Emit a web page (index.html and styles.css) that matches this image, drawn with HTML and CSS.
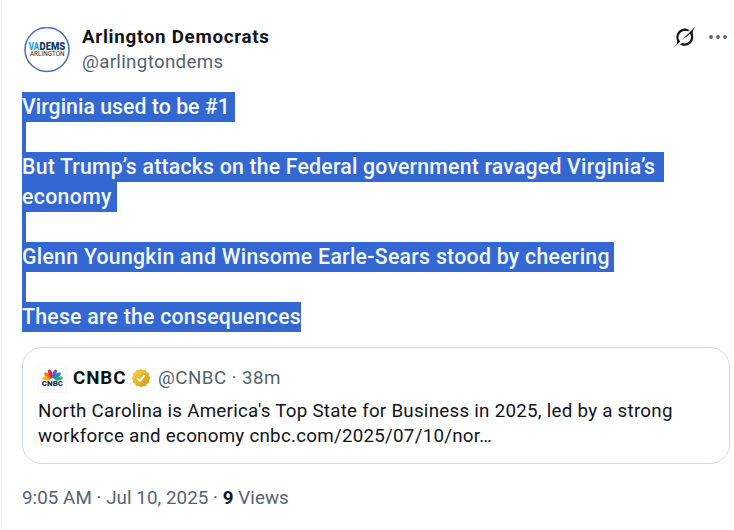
FILE: index.html
```html
<!DOCTYPE html>
<html lang="en">
<head>
    <meta charset="UTF-8">
    <meta name="viewport" content="width=device-width, initial-scale=1.0">
    <title>Arlington Democrats</title>
    <link rel="stylesheet" href="styles.css">
</head>
<body>
    <article class="post">
        <header class="post-header">
            <svg class="avatar" viewBox="0 0 46 46">
                <circle cx="23" cy="22.5" r="22" fill="#fff" stroke="#4f73b8" stroke-width="1.6"/>
                <text class="logo-va" x="4.8" y="23" textLength="10.4" lengthAdjust="spacingAndGlyphs">VA</text>
                <text class="logo-dems" x="15.6" y="23" textLength="25.6" lengthAdjust="spacingAndGlyphs">DEMS</text>
                <text class="logo-city" x="6" y="29" textLength="34.5" lengthAdjust="spacingAndGlyphs">ARLINGTON</text>
            </svg>
            <div class="author">
                <div class="name">Arlington Democrats</div>
                <div class="handle">@arlingtondems</div>
            </div>
            <div class="actions">
                <svg class="grok" viewBox="0 0 33 32">
                    <path d="M12.745 20.54l10.97-8.19c.539-.4 1.307-.244 1.564.38 1.349 3.288.746 7.241-1.938 9.955-2.683 2.714-6.417 3.31-9.83 1.954l-3.728 1.745c5.347 3.697 11.84 2.782 15.898-1.324 3.219-3.255 4.216-7.692 3.284-11.693l.008.009c-1.351-5.878.332-8.227 3.782-13.031L33 0l-4.54 4.59v-.014L12.743 20.544m-2.263 1.987c-3.837-3.707-3.175-9.446.1-12.755 2.42-2.449 6.388-3.448 9.852-1.979l3.72-1.737c-.67-.49-1.53-1.017-2.515-1.387-4.455-1.854-9.789-.931-13.41 2.728-3.483 3.523-4.579 8.94-2.697 13.561 1.405 3.454-.899 5.898-3.22 8.364C1.49 30.2.666 31.074 0 32l10.478-9.466"/>
                </svg>
                <svg class="more" viewBox="0 0 18 4">
                    <circle cx="2" cy="2" r="1.9"/>
                    <circle cx="9" cy="2" r="1.9"/>
                    <circle cx="16" cy="2" r="1.9"/>
                </svg>
            </div>
        </header>

        <div class="post-text">
            <p><span class="line l1">Virginia used to be #1</span></p>
            <p><span class="line empty"></span></p>
            <p><span class="line l2">But Trump’s attacks on the Federal government ravaged Virginia’s</span></p>
            <p><span class="line l3">economy</span></p>
            <p><span class="line empty"></span></p>
            <p><span class="line l4">Glenn Youngkin and Winsome Earle-Sears stood by cheering</span></p>
            <p><span class="line empty"></span></p>
            <p><span class="line l5">These are the consequences</span></p>
        </div>

        <section class="quote">
            <div class="quote-header">
                <svg class="cnbc" viewBox="0 0 30 30">
                    <rect x=".5" y=".5" width="29" height="29" fill="#fff" stroke="#f6f8f9"/>
                    <g transform="translate(15 16.5)">
                        <ellipse cx="0" cy="-6.6" rx="1.9" ry="4.2" transform="rotate(-78)" fill="#f5b51b"/>
                        <ellipse cx="0" cy="-6.6" rx="2" ry="4.6" transform="rotate(-48)" fill="#f07a22"/>
                        <ellipse cx="0" cy="-6.6" rx="2" ry="4.8" transform="rotate(-18)" fill="#e0264b"/>
                        <ellipse cx="0" cy="-6.6" rx="2" ry="4.8" transform="rotate(18)" fill="#7a52b3"/>
                        <ellipse cx="0" cy="-6.6" rx="2" ry="4.6" transform="rotate(48)" fill="#168bd8"/>
                        <ellipse cx="0" cy="-6.6" rx="1.9" ry="4.2" transform="rotate(78)" fill="#2db24a"/>
                    </g>
                    <text class="logo-cnbc" x="4" y="23" textLength="22" lengthAdjust="spacingAndGlyphs">CNBC</text>
                </svg>
                <span class="quote-name">CNBC</span>
                <svg class="badge" viewBox="0 0 20 20">
                    <defs>
                        <linearGradient id="gold" x1="0" y1="0" x2="20" y2="20" gradientUnits="userSpaceOnUse">
                            <stop offset="0" stop-color="#f6dc55"/>
                            <stop offset=".5" stop-color="#e4b52b"/>
                            <stop offset="1" stop-color="#cf9418"/>
                        </linearGradient>
                    </defs>
                    <path fill="url(#gold)" stroke="url(#gold)" stroke-linejoin="round" d="M10 .9l2 1.7 2.55-.5 .85 2.5 2.5.85-.5 2.55 1.7 2-1.7 2 .5 2.55-2.5.85-.85 2.5-2.55-.5-2 1.7-2-1.7-2.55.5-.85-2.5-2.5-.85.5-2.55-1.7-2 1.7-2-.5-2.55 2.5-.85.85-2.5 2.55.5z"/>
                    <path fill="none" stroke="#fff" stroke-width="1.8" d="M6.2 10.2l2.7 2.7 4.7-5.4"/>
                </svg>
                <span class="quote-meta">@CNBC · 38m</span>
            </div>
            <p class="quote-text">North Carolina is America's Top State for Business in 2025, led by a strong</p>
            <p class="quote-text">workforce and economy cnbc.com/2025/07/10/nor…</p>
        </section>

        <footer class="post-footer">9:05 AM · Jul 10, 2025 · <b>9</b> Views</footer>
    </article>
</body>
</html>
```
FILE: styles.css
```css
* {
    box-sizing: border-box;
}
body {
    margin: 0;
    background: #fff;
    color: #0f1419;
    font-family: Roboto, "Liberation Sans", sans-serif;
    font-size: 18.75px;
    line-height: 25px;
}
p {
    margin: 0;
    white-space: nowrap;
}
.post {
    height: 530px;
    margin-left: 1px;
    padding: 25px 4px 0 20px;
    border-left: 1px solid #eff3f4;
}
.post-header {
    display: flex;
    height: 67px;
}
.avatar {
    width: 46px;
    height: 46px;
    margin: 2px 12px 0 2px;
}
.logo-va, .logo-dems {
    font-size: 10.5px;
    font-weight: 900;
}
.logo-va {
    fill: #20a4dc;
}
.logo-dems {
    fill: #17365f;
}
.logo-city {
    font-size: 7.5px;
    font-weight: 400;
    fill: #222;
}
.name {
    font-weight: 700;
    letter-spacing: 0.72px;
}
.handle {
    color: #536471;
    letter-spacing: 0.32px;
}
.actions {
    display: flex;
    align-items: center;
    gap: 13px;
    height: 24px;
    margin-left: auto;
    padding-right: 3px;
}
.grok {
    width: 23px;
    height: 22px;
    fill: #0f1419;
}
.more {
    width: 18px;
    height: 4px;
    fill: #536471;
}
.post-text {
    font-size: 21.25px;
    font-weight: 500;
    line-height: 30px;
}
.post-text p {
    height: 30px;
}
.line {
    display: inline-block;
    height: 30px;
    background: #3367d1;
    color: #f3f8fe;
    vertical-align: top;
}
.empty {
    width: 4px;
}
.l1 {
    width: 213px;
    letter-spacing: 0.04px;
}
.l2 {
    width: 642px;
    letter-spacing: 0.21px;
}
.l3 {
    width: 95px;
    letter-spacing: 0.35px;
}
.l4 {
    width: 592px;
    letter-spacing: 0.28px;
}
.l5 {
    width: 279px;
    letter-spacing: 0.25px;
}
.quote {
    height: 117px;
    margin-top: 15px;
    padding: 15px;
    border: 1px solid #cfd9de;
    border-radius: 20px;
}
.quote-header {
    display: flex;
    align-items: center;
    height: 30px;
    margin-bottom: 6px;
}
.cnbc {
    width: 29px;
    height: 29px;
    margin-right: 6px;
}
.logo-cnbc {
    font-size: 7.6px;
    font-weight: 900;
    fill: #1b2a5c;
}
.quote-name {
    width: 58px;
    font-weight: 700;
    letter-spacing: 0.9px;
}
.badge {
    width: 20px;
    height: 20px;
    margin-right: 7px;
}
.quote-meta {
    color: #536471;
    letter-spacing: 0.45px;
}
.quote-text {
    letter-spacing: 0.26px;
}
.post-footer {
    margin-top: 22px;
    color: #536471;
    letter-spacing: 0.06px;
}
.post-footer b {
    color: #0f1419;
}
```
